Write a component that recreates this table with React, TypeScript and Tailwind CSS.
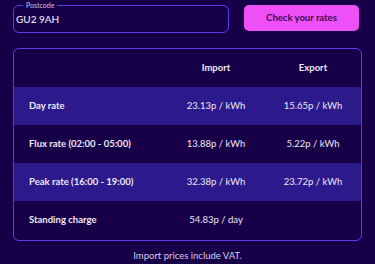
import React from "react";

const rows = [
  { label: "Day rate", imp: "23.13p / kWh", exp: "15.65p / kWh", hl: true },
  { label: "Flux rate (02:00 - 05:00)", imp: "13.88p / kWh", exp: "5.22p / kWh", hl: false },
  { label: "Peak rate (16:00 - 19:00)", imp: "32.38p / kWh", exp: "23.72p / kWh", hl: true },
  { label: "Standing charge", imp: "54.83p / day", exp: "", hl: false },
];

export default function App() {
  return (
    <div
      className="w-[375px] h-[264px] bg-[#180048] text-[#ece8f7] overflow-hidden"
      style={{ fontFamily: "Lato, 'Noto Sans', sans-serif" }}
    >
      <div className="flex items-start pt-[5px] px-[13px] gap-[15px]">
        <div className="relative w-[216px] h-[28px] rounded-[6px] border border-[#5a3cf0] flex items-center pl-[2px]">
          <span className="absolute -top-[6px] left-[9px] px-[3px] bg-[#180048] text-[7px] leading-[10px] text-[#c9c2e6]">
            Postcode
          </span>
          <span className="text-[10px] font-medium pt-[1px]">GU2 9AH</span>
        </div>
        <button className="w-[115px] h-[26px] rounded-[5px] bg-[#ef4ff6] text-[#3a0a52] text-[9.5px] font-bold flex items-center justify-center">
          Check your rates
        </button>
      </div>
      <div className="mx-[13px] mt-[15px] h-[193px] rounded-[6px] border border-[#5a3cf0] overflow-hidden flex flex-col">
        <div className="h-[38px] flex items-center text-[9.5px] font-bold shrink-0">
          <div className="w-[150px] pl-[15px]"></div>
          <div className="w-[104px] text-center">Import</div>
          <div className="w-[90px] text-center">Export</div>
        </div>
        {rows.map((r) => (
          <div
            key={r.label}
            className={`h-[38px] flex items-center text-[9.5px] shrink-0 ${r.hl ? "bg-[#2c1a8c]" : ""}`}
          >
            <div className="w-[150px] pl-[15px] font-bold">{r.label}</div>
            <div className="w-[104px] text-center">{r.imp}</div>
            <div className="w-[90px] text-center">{r.exp}</div>
          </div>
        ))}
      </div>
      <div className="text-center text-[9.5px] mt-[8px] text-[#d4cdeb]">Import prices include VAT.</div>
    </div>
  );
}
